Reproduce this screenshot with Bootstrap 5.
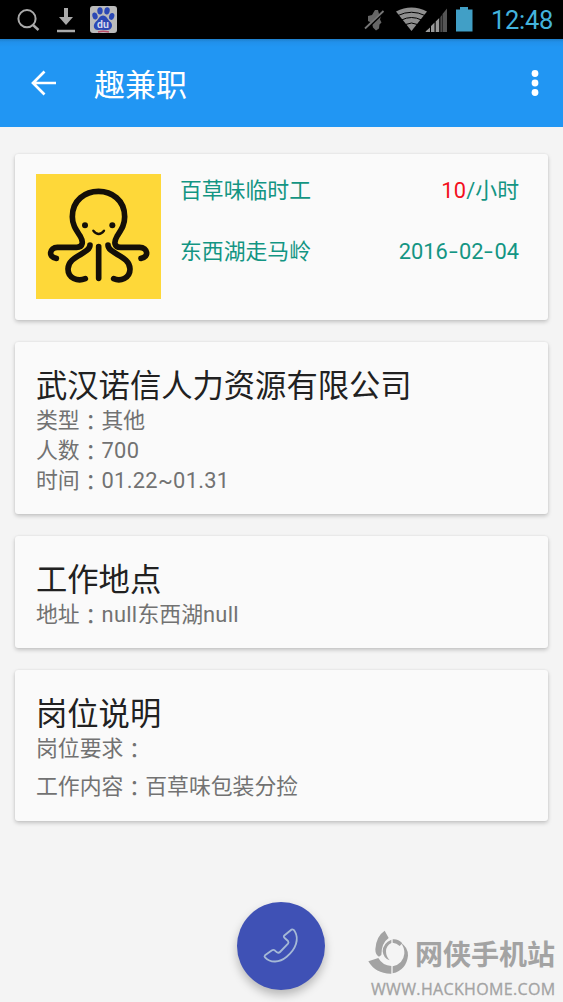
<!DOCTYPE html>
<html lang="zh-CN">
<head>
<meta charset="utf-8">
<meta name="viewport" content="width=device-width, initial-scale=1">
<title>趣兼职</title>
<link rel="stylesheet" href="https://cdn.jsdelivr.net/npm/bootstrap@5.3.0/dist/css/bootstrap.min.css">
<style>
body{background:#f4f4f4;font-family:Roboto,"Noto Sans CJK SC",sans-serif;font-size:21.85px;line-height:30px;color:#727272;height:1002px;overflow:hidden}
svg{display:block;flex:none}
.status{height:39px;background:#000;padding:0 10px 0 16px}
.clock{font-size:25.5px;color:#43b3dc;line-height:39px;letter-spacing:-.3px;padding:2px 0 0 17px}
.appbar{height:88px;background:linear-gradient(#1e7fcb 0,#2190ea 3px,#2196f3 8px);padding:0 26px 0 30px}
.appbar h1{font-size:31px;line-height:40px;font-weight:400;margin:5px 0 0 37px}
.content{padding:27px 15px 0;gap:22px}
.panel{background:#fafafa;border:0;border-radius:3px;padding:26px 21px 0;box-shadow:0 2px 4px rgba(0,0,0,.2),0 0 2px rgba(0,0,0,.08)}
.panel h2{font-size:31.3px;line-height:38px;font-weight:400;color:#212121;margin:0}
.job{height:166px;padding:20px 29px 0 21px;color:#139583;gap:19px}
.firm{height:172px}.place{height:112px}.duty{height:151px}
.job .line{height:61px;line-height:34px}
.pay{color:#f3101d}
.dash{display:inline-block;width:11px;text-align:center;transform:scaleX(1.45)}
.colon{font-family:"Noto Sans CJK TC",sans-serif;line-height:0;vertical-align:-2px}
.latin{letter-spacing:.3px}
.call{width:88px;height:88px;background:#3f51b5;box-shadow:0 5px 10px rgba(0,0,0,.25);left:237px;top:902px;border:0;padding:0}
.stamp{left:367px;top:926px;color:#a3a3a3;font-family:"Noto Sans CJK SC",sans-serif}
.stamp b{font-size:28px;line-height:50px;font-weight:700;margin-top:2px}
.site{font:16px/24px "Open Sans","Noto Sans",sans-serif;letter-spacing:.35px;padding-left:4px;margin-top:-1px;white-space:nowrap;-webkit-text-stroke:.3px #a3a3a3}
</style>
</head>
<body>
<header>
<div class="status d-flex align-items-center">
<svg width="104" height="39" viewBox="16 0 104 39" fill="none" stroke="#aaa">
<circle cx="27" cy="18.700" r="8.600" stroke-width="2"/><path d="M33 25l5.500 5" stroke-width="2.400"/>
<path d="M64 8h4v9h5l-7 8-7-8h5z" fill="#aaa" stroke="none"/><path d="M57 31h18" stroke-width="2.500"/>
<rect x="90" y="6" width="27" height="27" rx="3" fill="#bbb" stroke="none"/>
<g fill="#2b48b5" stroke="none"><ellipse cx="95" cy="16" rx="2.600" ry="3.500" transform="rotate(-15 95 16)"/><ellipse cx="100" cy="10.800" rx="2.700" ry="3.600"/><ellipse cx="107" cy="10.900" rx="2.700" ry="3.600" transform="rotate(10 107 11)"/><ellipse cx="111.800" cy="16.500" rx="2.600" ry="3.500" transform="rotate(15 112 16)"/><path d="M103 15.500c3.500 0 4.500 4 7 6 4 3.500 1.500 8.500-2.500 8.500-3 0-6-.6-9 0-4.500.5-6.500-4.500-2.500-8.500 2.500-2 3.500-6 7-6z"/></g>
<text x="97" y="27.500" font-family="Roboto" font-size="10.500" font-weight="700" fill="#d5d9ec" stroke="none">du</text><path d="M98 32q5-1.500 11 0" stroke="#b94d68" stroke-width="1.500"/>
</svg>
<svg class="ms-auto" width="111" height="39" viewBox="365 0 111 39">
<path d="M370 16l4-1 3-5 3 0 1 4 2 1.500-1 4 1.500 3-2 2-.5 4-3 2-3-3-1-4.500-4-2z" fill="#666"/><path d="M367.500 29.500L386 11.500" stroke="#000" stroke-width="3"/><path d="M367 28.500L385.500 11" stroke="#777" stroke-width="1.800"/>
<path d="M413.500 31l-15.500-19.500q15.500-8 31 0z" fill="#8f8f8f"/><path d="M400 15.500q13.500-6.500 27 0M403.500 20q10-5 20 0M407.500 24.500q6-3 12 0" stroke="#000" stroke-width="1" fill="none"/>
<path d="M427.500 31.500l4.500-4v4.500h-4zM433 26l3.500-3.500V32H433zM437.700 21.500l3.500-3.500v14h-3.500z" fill="#999"/><path d="M442.400 17l1.500-2v17h-1.500zM444.500 14l4.500-5.500V32h-4.500z" fill="#555"/>
<path d="M458 9.500h4V7h8v2.500h4.500v22H458z" fill="#419fc6"/>
</svg>
<span class="clock">12:48</span>
</div>
<nav class="appbar d-flex align-items-center text-white">
<svg width="27" height="26" viewBox="30 70 27 26" fill="none" stroke="#fff" stroke-width="2.700"><path d="M56 83H33.500M44.500 71.500L33 83l11.500 11.500"/></svg>
<h1>趣兼职</h1>
<svg class="ms-auto" width="6" height="26" viewBox="0 0 6 26" fill="#fff" overflow="visible"><circle cx="4" cy="3.500" r="3.400"/><circle cx="4" cy="13" r="3.400"/><circle cx="4" cy="22.500" r="3.400"/></svg>
</nav>
</header>
<main class="content d-flex flex-column">
<section class="card panel job flex-row">
<svg width="125" height="125" viewBox="18 27 375 375" fill="none" stroke="#140f08" stroke-width="17" stroke-linecap="round" stroke-linejoin="round">
<path d="M18 27h375v375H18z" fill="#fed839" stroke="none"/>
<path d="M79 280c-26-3-20-33 3-33h58c20 0 20-18 11-33-13-20-24-34-24-59 0-101 157-101 157 0 0 25-10 38-23 59-10 17-9 33 11 33h57c25 0 29 30 4 33"/>
<path d="M180 240c0 27-66 32-66 72 0 28 29 38 52 29M234 240c0 27 66 32 66 72 0 28-29 38-49 29M206 245v95"/>
<path d="M190 197q16 20 32 0" stroke-width="7"/><circle cx="165" cy="181" r="9" fill="#140f08" stroke="none"/><circle cx="247" cy="181" r="9" fill="#140f08" stroke="none"/>
</svg>
<div class="flex-grow-1">
<div class="line d-flex justify-content-between"><span>百草味临时工</span><span><span class="pay latin">10</span>/小时</span></div>
<div class="line d-flex justify-content-between"><span>东西湖走马岭</span><span>2016<span class="dash">-</span>02<span class="dash">-</span>04</span></div>
</div>
</section>
<section class="card panel firm">
<h2>武汉诺信人力资源有限公司</h2>
<div>类型<span class="colon" lang="zh-Hant">：</span>其他</div>
<div>人数<span class="colon" lang="zh-Hant">：</span><span class="latin">700</span></div>
<div>时间<span class="colon" lang="zh-Hant">：</span><span class="latin">01.22~01.31</span></div>
</section>
<section class="card panel place">
<h2>工作地点</h2>
<div>地址<span class="colon" lang="zh-Hant">：</span><span class="latin">null</span>东西湖<span class="latin">null</span></div>
</section>
<section class="card panel duty">
<h2>岗位说明</h2>
<div>岗位要求<span class="colon" lang="zh-Hant">：</span></div>
<div class="mt-2">工作内容<span class="colon" lang="zh-Hant">：</span>百草味包装分捡</div>
</section>
</main>
<button class="call btn rounded-circle position-absolute" type="button" aria-label="Call">
<svg width="88" height="88" viewBox="54 51 264 264" fill="none" stroke="#a5b9d6" stroke-width="5.500" stroke-linejoin="round"><path d="M217 134l-22 18q-2 3 2 7l10 9q3 4 0 8l-24 25q-4 4-9 1l-7-6q-4-3-8 0l-21 15q-3 3 0 6c17 18 43 16 65-2 29-24 37-53 25-75q-4-9-11-6z"/></svg>
</button>
<div class="stamp position-absolute">
<div class="d-flex align-items-center">
<svg width="48" height="50" viewBox="9 0 144 150" fill="#a3a3a3"><path d="M62 11L74 33Q52 48 52 84L45 89Q34 84 34 67 36 28 62 11zM13 103L43 93Q55 115 82 117V140Q35 141 13 103zM86 118Q118 110 121 80 122 62 111 48 132 60 132 86 127 129 86 139z"/><path d="M82 38V48Q66 56 66 73 66 89 77 100 58 94 56 73 57 48 82 38zM86 37Q102 35 115 49L107 57Q98 48 86 47z"/></svg>
<b>网侠手机站</b>
</div>
<div class="site">WWW.HACKHOME.COM</div>
</div>
<script src="https://cdn.jsdelivr.net/npm/bootstrap@5.3.0/dist/js/bootstrap.bundle.min.js"></script>
</body>
</html>
